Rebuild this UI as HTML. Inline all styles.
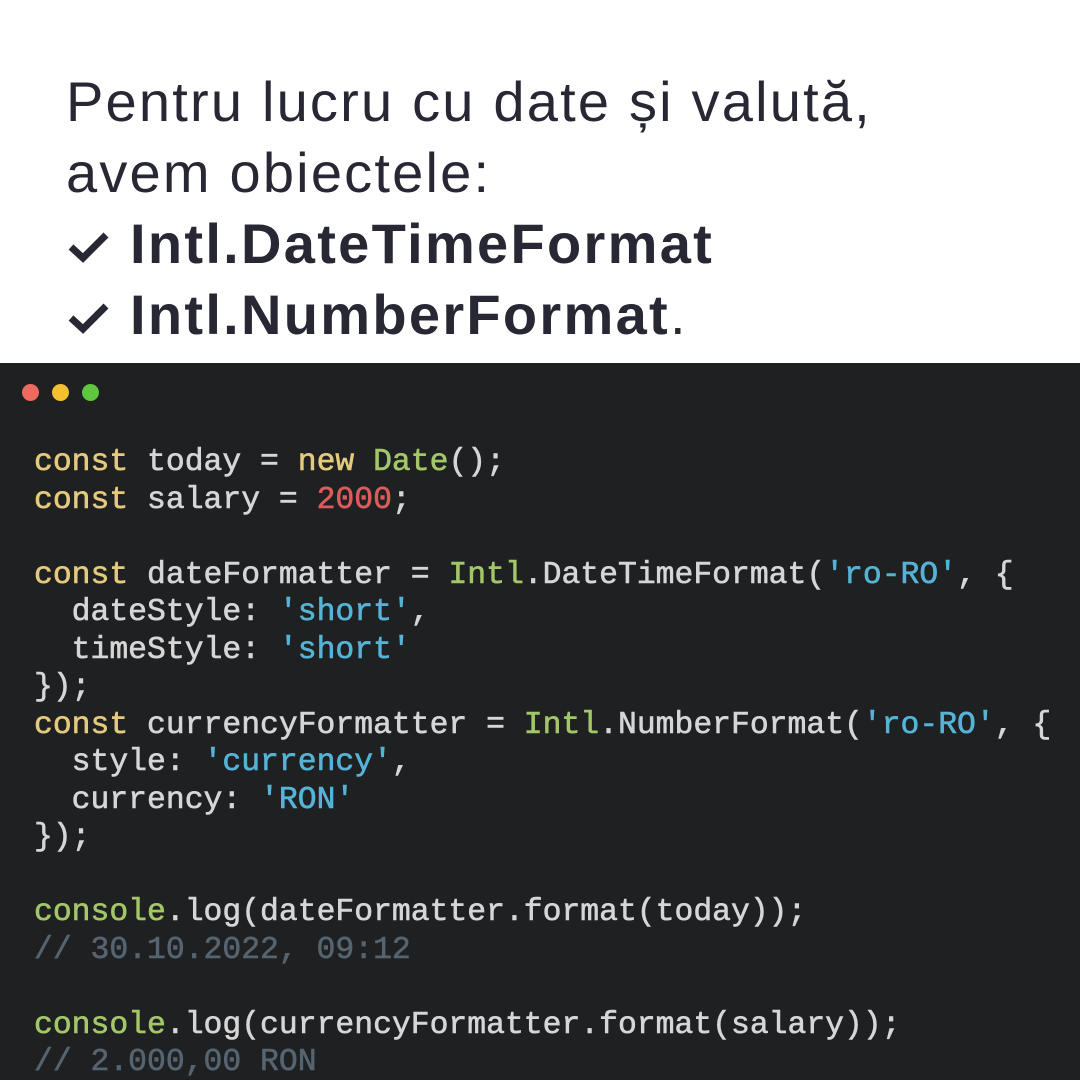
<!DOCTYPE html>
<html><head><meta charset="utf-8"><style>
body{margin:0;width:1080px;height:1080px;overflow:hidden;background:#fff;position:relative}
.h{position:absolute;left:66px;top:66px;font-family:"Liberation Sans",sans-serif;font-size:56px;line-height:71px;color:#272833;letter-spacing:2.2px;white-space:nowrap}
.h b{font-weight:bold;letter-spacing:2.3px}
.ck{display:inline-block;width:64px}
.p{position:absolute;left:0;top:363px;width:1080px;height:717px;background:#1f2022}
.d{position:absolute;top:384px;width:17px;height:17px;border-radius:50%}
pre{position:absolute;left:34px;top:444px;margin:0;font-family:"Liberation Mono",monospace;font-size:31.4px;line-height:37.5px;color:#d6d6d6;-webkit-text-stroke:0.6px currentColor}
.k{color:#e4ca7d}.g{color:#a3c768}.r{color:#dc5c5c}.s{color:#55b4d6}.c{color:#566470}
</style></head><body>
<div class="h">Pentru lucru cu date și valută,<br>avem obiectele:<br><span class="ck"><svg width="46" height="36" viewBox="0 0 46 36" style="vertical-align:-2px"><path d="M5 18 L17 29 L40 6" stroke="#272833" stroke-width="7" fill="none"/></svg></span><b>Intl.DateTimeFormat</b><br><span class="ck"><svg width="46" height="36" viewBox="0 0 46 36" style="vertical-align:-2px"><path d="M5 18 L17 29 L40 6" stroke="#272833" stroke-width="7" fill="none"/></svg></span><b>Intl.NumberFormat</b>.</div>
<div class="p"></div>
<div class="d" style="left:22px;background:#ee6a5f"></div>
<div class="d" style="left:52px;background:#f4c02f"></div>
<div class="d" style="left:82px;background:#5ec63f"></div>
<pre><span class="k">const</span> today = <span class="k">new</span> <span class="g">Date</span>();
<span class="k">const</span> salary = <span class="r">2000</span>;

<span class="k">const</span> dateFormatter = <span class="g">Intl</span>.DateTimeFormat(<span class="s">'ro-RO'</span>, {
  dateStyle: <span class="s">'short'</span>,
  timeStyle: <span class="s">'short'</span>
});
<span class="k">const</span> currencyFormatter = <span class="g">Intl</span>.NumberFormat(<span class="s">'ro-RO'</span>, {
  style: <span class="s">'currency'</span>,
  currency: <span class="s">'RON'</span>
});

<span class="g">console</span>.log(dateFormatter.format(today));
<span class="c">// 30.10.2022, 09:12</span>

<span class="g">console</span>.log(currencyFormatter.format(salary));
<span class="c">// 2.000,00 RON</span></pre>
</body></html>
